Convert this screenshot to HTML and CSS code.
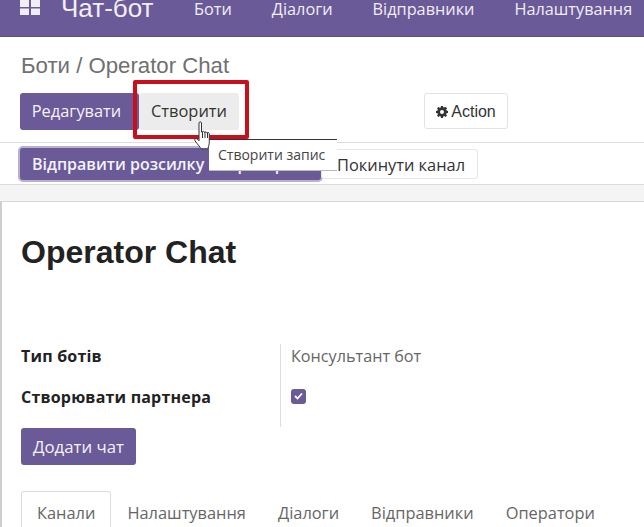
FILE: index.html
```html
<!DOCTYPE html>
<html lang="uk">
<head>
<meta charset="utf-8">
<title>Чат-бот</title>
<link rel="stylesheet" href="styles.css">
</head>
<body>
<header class="nav">
  <svg class="apps" width="20" height="15" viewBox="0 0 20 15"><path fill="#f1eef6" d="M0 0h9v7H0zM11 0h9v7h-9zM0 8.500h9V15H0zM11 8.500h9V15h-9z"/></svg>
  <span class="brand">Чат-бот</span>
  <nav class="menu">
    <span>Боти</span><span>Діалоги</span><span>Відправники</span><span>Налаштування</span>
  </nav>
</header>
<section class="control">
  <h2 class="crumbs">Боти / Operator Chat</h2>
  <div class="actions">
    <button class="btn primary">Редагувати</button>
    <button class="btn create">Створити</button>
    <button class="btn action"><svg class="gear" width="12" height="12" viewBox="0 0 12 12"><path fill="#333" fill-rule="evenodd" d="M5 0h2l.3 1.600 1-.4L9.700 .9l1.400 1.400-1 1.300.5 1 1.400.400v2l-1.500.3-.4 1 .9 1.300-1.400 1.400-1.300-.9-1 .4L7 12H5l-.3-1.500-1-.4-1.300.9L1 9.600l.9-1.300-.4-1L0 7V5l1.500-.4.4-1-.9-1.300L2.400 .9l1.300.9 1-.4zM6 4a2 2 0 1 0 0 4 2 2 0 0 0 0-4z"/></svg>Action</button>
  </div>
</section>
<section class="statusbar">
  <button class="btn primary send">Відправити розсилку операторам</button>
  <button class="btn leave">Покинути канал</button>
</section>
<main class="band">
  <article class="sheet">
    <h1 class="title">Operator Chat</h1>
    <div class="fields">
      <div class="labels">
        <div class="label">Тип ботів</div>
        <div class="label">Створювати партнера</div>
      </div>
      <div class="values">
        <div class="value first">Консультант бот</div>
        <div class="value second"><span class="check"><svg width="9" height="8" viewBox="0 0 9 8"><path d="M1 4l2.500 2.500L8 1.500" fill="none" stroke="#fff" stroke-width="1.800"/></svg></span></div>
      </div>
    </div>
    <button class="btn primary add">Додати чат</button>
    <div class="tabs">
      <span class="tab active">Канали</span><span class="tab">Налаштування</span><span class="tab">Діалоги</span><span class="tab">Відправники</span><span class="tab">Оператори</span>
    </div>
  </article>
</main>
<div class="highlight"></div>
<div class="tooltip">Створити запис</div>
<svg class="hand" width="20" height="30" viewBox="0 0 20 30"><path fill="#fff" stroke="#333" stroke-width="1" stroke-linejoin="round" d="M6 2c0-1.500 2.500-1.500 2.500 0v9l1-.5c1-.5 2 0 2 .8 1-.8 2.200-.4 2.400.5 1-.6 2.400-.2 2.400 1v8c0 3-1 5-1.500 7H8c-1-2-3-4-6-8-1-1.500.5-3 2-2l2 2z"/><path stroke="#333" fill="none" d="M9.500 11v6M12 11v6M14.500 12v5"/></svg>
</body>
</html>
```
FILE: styles.css
```css
* { box-sizing: border-box; }
html, body { margin: 0; padding: 0; }
body {
  width: 644px;
  height: 527px;
  overflow: hidden;
  position: relative;
  background: #fff;
  font-family: "Open Sans", sans-serif;
  color: #333;
}
.nav {
  height: 37px;
  background: #6a5a98;
  border-bottom: 1px solid #5c5080;
  display: flex;
  align-items: flex-start;
  color: #f1eef6;
  padding-left: 20px;
}
.apps { flex: none; }
.brand {
  font-family: "Liberation Sans", sans-serif;
  font-size: 26px;
  line-height: 16px;
  margin-left: 21px;
  width: 133px;
  white-space: nowrap;
}
.menu { display: flex; gap: 40px; font-size: 16.300px; line-height: 18px; white-space: nowrap; }
.control { height: 106px; padding: 16px 0 0 21px; border-bottom: 1px solid #ddd; position: relative; }
.crumbs {
  margin: 0;
  font-family: "Liberation Sans", sans-serif;
  font-weight: 400;
  font-size: 22.200px;
  line-height: 25px;
  color: #707070;
}
.actions { display: flex; margin: 15px 0 0 -1px; align-items: flex-start; }
.btn {
  font-family: "Open Sans", sans-serif;
  font-size: 16.400px;
  border: 0;
  border-radius: 3px;
  padding: 0;
  color: #333;
  background: #fff;
  display: inline-flex;
  align-items: center;
  justify-content: center;
}
.primary { background: #6a5a98; color: #f4f2f8; }
.actions .primary { width: 119px; height: 37px; padding: 0 6px 3px 0; }
.create { width: 100px; height: 37px; background: #ececec; padding-bottom: 3px; }
.action {
  width: 84px;
  height: 36px;
  margin-left: 185px;
  border: 1px solid #e3e3e3;
  font-family: "Liberation Sans", sans-serif;
  font-size: 16px;
  gap: 3px;
  padding-top: 1px;
}
.statusbar { height: 42px; padding: 5px 0 0 20px; display: flex; align-items: flex-start; border-bottom: 1px solid #dcdcdc; }
.send {
  width: 301px;
  height: 32px;
  font-weight: 600;
  font-size: 16px;
  justify-content: flex-start;
  padding-left: 12px;
  white-space: nowrap;
  overflow: hidden;
  box-shadow: 0 0 0 2px #b9b2cf;
}
.leave {
  width: 157px;
  height: 30px;
  border: 1px solid #e6e6e6;
  margin-top: 1px;
  padding-left: 3px;
}
.band {
  height: 342px;
  padding-top: 16px;
  background: #f4f4f4;
}
.sheet {
  height: 326px;
  background: #fff;
  border-left: 2px solid #cfcfcf;
  border-top: 1px solid #d8d8d8;
  padding: 0 0 0 19px;
}
.title {
  margin: 32px 0 0;
  font-family: "Liberation Sans", sans-serif;
  font-size: 32px;
  line-height: 36px;
  font-weight: 700;
  color: #222;
}
.fields { display: flex; margin-top: 66px; }
.labels { width: 259px; }
.label { font-weight: 700; font-size: 16px; line-height: 41px; color: #222; letter-spacing: .2px; white-space: nowrap; }
.values { border-left: 1px solid #ddd; padding-left: 10px; margin-top: 8px; height: 83px; }
.value { font-size: 16.200px; color: #666; display: flex; align-items: center; white-space: nowrap; }
.first { height: 23px; }
.second { height: 58px; }
.check {
  width: 15px;
  height: 15px;
  background: #6a5a98;
  border-radius: 3px;
  display: flex;
  align-items: center;
  justify-content: center;
}
.add { width: 115px; height: 37px; font-size: 16.800px; margin-top: 1px; display: flex; }
.tabs { display: flex; margin-top: 26px; font-size: 16.400px; color: #666; white-space: nowrap; }
.tab { padding: 0 15px; line-height: 41px; height: 40px; border: 1px solid transparent; border-bottom: 0; }
.active { border-color: #ddd; border-radius: 3px 3px 0 0; }
.highlight {
  position: absolute;
  left: 133px;
  top: 80px;
  width: 116px;
  height: 59px;
  border: 4px solid #c8101c;
  border-radius: 2px;
}
.tooltip {
  position: absolute;
  left: 209px;
  top: 139px;
  width: 128px;
  height: 32px;
  background: #fff;
  border-top: 1px solid #333;
  border-bottom: 1px solid #bbb;
  font-size: 14px;
  line-height: 30px;
  padding-left: 9px;
  color: #444;
  white-space: nowrap;
}
.hand { position: absolute; left: 193px; top: 121px; }
```
